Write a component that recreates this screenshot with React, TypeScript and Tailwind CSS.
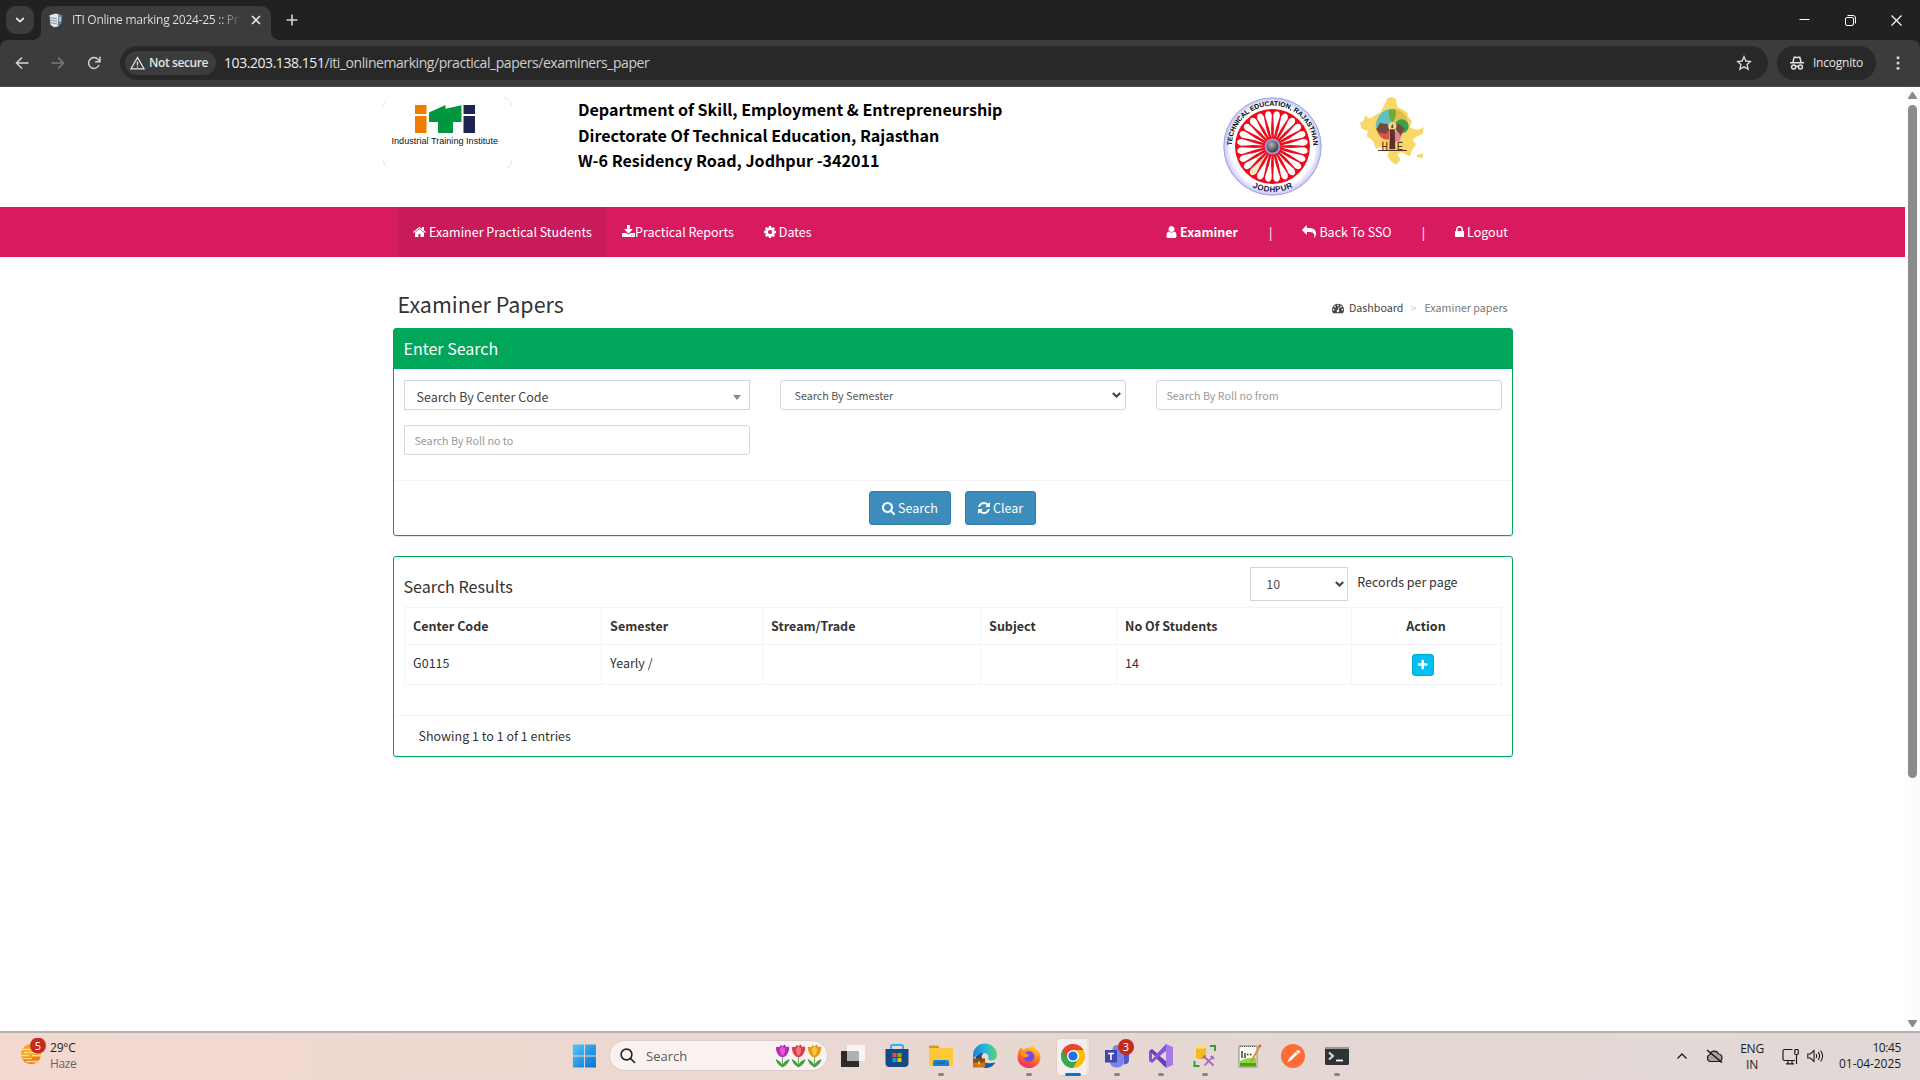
import type { ReactNode } from 'react';

/* ---------- Solid glyph icons (1792-unit grid) ---------- */
const GLYPHS = {
  home: [1664, 'M1472 992v480q0 26-19 45t-45 19h-384v-384h-256v384h-384q-26 0-45-19t-19-45v-480q0-1 .5-3t.5-3l575-474 575 474q1 2 1 6zm223-69l-62 74q-8 9-21 11h-3q-13 0-21-7l-692-577-692 577q-12 8-24 7-13-2-21-11l-62-74q-8-10-7-23.5t11-21.5l719-599q32-26 76-26t76 26l244 204v-195q0-14 9-23t23-9h192q14 0 23 9t9 23v408l219 182q10 8 11 21.5t-7 23.5z'],
  download: [1664, 'M1344 1344q0-26-19-45t-45-19-45 19-19 45 19 45 45 19 45-19 19-45zm256 0q0-26-19-45t-45-19-45 19-19 45 19 45 45 19 45-19 19-45zm128-224v320q0 40-28 68t-68 28h-1472q-40 0-68-28t-28-68v-320q0-40 28-68t68-28h465l135 136q58 56 136 56t136-56l136-136h464q40 0 68 28t28 68zm-325-569q17 41-14 70l-448 448q-18 19-45 19t-45-19l-448-448q-31-29-14-70 17-39 59-39h256v-448q0-26 19-45t45-19h256q26 0 45 19t19 45v448h256q42 0 59 39z'],
  cog: [1536, 'M1152 896q0-106-75-181t-181-75-181 75-75 181 75 181 181 75 181-75 75-181zm512-109v222q0 12-8 23t-20 13l-185 28q-19 54-39 91 35 50 107 138 10 12 10 25t-9 23q-27 37-99 108t-94 71q-12 0-26-9l-138-108q-44 23-91 38-16 136-29 186-7 28-36 28h-222q-14 0-24.5-8.5t-11.5-21.5l-28-184q-49-16-90-37l-141 107q-10 9-25 9-14 0-25-11-126-114-165-168-7-10-7-23 0-12 8-23 15-21 51-66.5t54-70.5q-27-50-41-99l-183-27q-13-2-21-12.5t-8-23.5v-222q0-12 8-23t19-13l186-28q14-46 39-92-40-57-107-138-10-12-10-24 0-10 9-23 26-36 98.5-107.5t94.5-71.5q13 0 26 10l138 107q44-23 91-38 16-136 29-186 7-28 36-28h222q14 0 24.5 8.5t11.5 21.5l28 184q49 16 90 37l142-107q9-9 24-9 13 0 25 10 129 119 165 170 7 8 7 22 0 12-8 23-15 21-51 66.5t-54 70.5q26 50 41 98l183 28q13 2 21 12.5t8 23.5z'],
  user: [1408, 'M1536 1399q0 109-62.5 187t-150.5 78h-854q-88 0-150.5-78t-62.5-187q0-85 8.5-160.5t31.5-152 58.5-131 94-89 134.5-34.5q131 128 313 128t313-128q76 0 134.5 34.5t94 89 58.5 131 31.5 152 8.5 160.5zm-256-887q0 159-112.5 271.5t-271.5 112.5-271.5-112.5-112.5-271.5 112.5-271.5 271.5-112.5 271.5 112.5 112.5 271.5z'],
  reply: [1792, 'M1792 1120q0 166-127 451-3 7-10.5 24t-13.5 30-13 22q-12 17-28 17-15 0-23.5-10t-8.5-25q0-9 2.5-26.5t2.5-23.5q5-68 5-123 0-101-17.5-181t-48.5-138.5-80-101-105.5-69.5-133-42.5-154-21.5-175.5-6h-224v256q0 26-19 45t-45 19-45-19l-512-512q-19-19-19-45t19-45l512-512q19-19 45-19t45 19 19 45v256h224q713 0 875 403 53 134 53 333z'],
  lock: [1152, 'M640 768h512v-192q0-106-75-181t-181-75-181 75-75 181v192zm832 96v576q0 40-28 68t-68 28h-960q-40 0-68-28t-28-68v-576q0-40 28-68t68-28h32v-192q0-184 132-316t316-132 316 132 132 316v192h32q40 0 68 28t28 68z'],
  search: [1664, 'M1216 832q0-185-131.5-316.5t-316.5-131.5-316.5 131.5-131.5 316.5 131.5 316.5 316.5 131.5 316.5-131.5 131.5-316.5zm512 832q0 52-38 90t-90 38q-54 0-90-38l-343-342q-179 124-399 124-143 0-273.5-55.5t-225-150-150-225-55.5-273.5 55.5-273.5 150-225 225-150 273.5-55.5 273.5 55.5 225 150 150 225 55.5 273.5q0 220-124 399l343 343q37 37 37 90z'],
  refresh: [1536, 'M1639 1056q0 5-1 7-64 268-268 434.5t-478 166.5q-146 0-282.5-55t-243.5-157l-129 129q-19 19-45 19t-45-19-19-45v-448q0-26 19-45t45-19h448q26 0 45 19t19 45-19 45l-137 137q71 66 161 102t187 36q134 0 250-65t186-179q11-17 53-117 8-23 30-23h192q13 0 22.5 9.5t9.5 22.5zm25-800v448q0 26-19 45t-45 19h-448q-26 0-45-19t-19-45 19-45l138-138q-148-137-349-137-134 0-250 65t-186 179q-11 17-53 117-8 23-30 23h-199q-13 0-22.5-9.5t-9.5-22.5v-7q65-268 270-434.5t480-166.5q146 0 284 55.5t245 156.5l130-129q19-19 45-19t45 19 19 45z'],
  plus: [1408, 'M1600 736v192q0 40-28 68t-68 28h-416v416q0 40-28 68t-68 28h-192q-40 0-68-28t-28-68v-416h-416q-40 0-68-28t-28-68v-192q0-40 28-68t68-28h416v-416q0-40 28-68t68-28h192q40 0 68 28t28 68v416h416q40 0 68 28t28 68z'],
  gauge: [1792, 'M384 1152q0-53-37.5-90.5t-90.5-37.5-90.5 37.5-37.5 90.5 37.5 90.5 90.5 37.5 90.5-37.5 37.5-90.5zm192-448q0-53-37.5-90.5t-90.5-37.5-90.5 37.5-37.5 90.5 37.5 90.5 90.5 37.5 90.5-37.5 37.5-90.5zm428 481l101-382q6-26-7.5-48.5t-38.5-29.5-48 6.5-30 39.5l-101 382q-60 5-107 43.5t-63 98.5q-20 77 20 146t117 89 146-20 89-117q16-60-6-117t-72-91zm660-33q0-53-37.5-90.5t-90.5-37.5-90.5 37.5-37.5 90.5 37.5 90.5 90.5 37.5 90.5-37.5 37.5-90.5zm-640-640q0-53-37.5-90.5t-90.5-37.5-90.5 37.5-37.5 90.5 37.5 90.5 90.5 37.5 90.5-37.5 37.5-90.5zm448 192q0-53-37.5-90.5t-90.5-37.5-90.5 37.5-37.5 90.5 37.5 90.5 90.5 37.5 90.5-37.5 37.5-90.5zm320 448q0 261-141 483-19 29-54 29h-1402q-35 0-54-29-141-221-141-483 0-182 71-348t191-286 286-191 348-71 348 71 286 191 191 286 71 348z'],
} as const;

function Glyph({ name, size = 14, className = '' }: { name: keyof typeof GLYPHS; size?: number; className?: string }) {
  const [w, d] = GLYPHS[name];
  return (
    <svg className={`shrink-0 fill-current ${className}`} width={(w / 1792) * size} height={size} viewBox={`${(1792 - w) / 2} 0 ${w} 1792`} overflow="visible">
      <path d={d} />
    </svg>
  );
}

/* ---------- Browser chrome ---------- */
function TabStrip() {
  return (
    <div className="flex h-10 items-start bg-[#202221] text-[#e3e3e3]">
      <div className="mt-[6px] ml-[6px] flex h-7 w-7 items-center justify-center rounded-[10px] bg-[#3c3c3c]">
        <svg width="10" height="6" viewBox="0 0 10 6" fill="none" stroke="#e3e3e3" strokeWidth="1.8"><path d="M1.2 1 5 4.6 8.8 1" /></svg>
      </div>
      <div className="flex h-10 w-[246px] items-end pt-[6px] -ml-[1px]">
        <svg width="8" height="10" viewBox="0 0 8 10" className="shrink-0" fill="#3c3c3c"><path d="M8 0v10H0A8 9 0 0 0 8 0z" /></svg>
        <div className="flex h-[34px] w-[231px] items-center rounded-t-[10px] bg-[#3c3c3c] pb-[6px]">
          <svg className="ml-[7px] shrink-0" width="16" height="16" viewBox="0 0 16 16">
            <path d="M1.5 3.2 8 1.5l3 1-.5 12-4.5.8L2.6 13z" fill="#dfe6ec" />
            <path d="M10.5 2.2 14.5 3.2l-1 8-3.8 3.6z" fill="#5f7f9e" />
            <path d="M2 5.5 9 7M2.3 8l6.7 1.4M2.5 10.500 9 12" stroke="#8398a8" strokeWidth="1" />
            <path d="M12 4.8v5" stroke="#d3dde5" strokeWidth="1.4" />
          </svg>
          <div className="ml-[8px] w-[171px] bg-[linear-gradient(90deg,#e3e3e3_86%,#444444_99%)] bg-clip-text font-['Open_Sans',sans-serif] text-[12px] leading-5 tracking-[-0.27px] whitespace-nowrap text-transparent">
            ITI Online marking 2024-25 :: Pr
          </div>
          <svg className="ml-[8px] shrink-0" width="10" height="10" viewBox="0 0 10 10" stroke="#e3e3e3" strokeWidth="1.6"><path d="M1 1l8 8M9 1 1 9" /></svg>
        </div>
        <svg width="8" height="10" viewBox="0 0 8 10" className="shrink-0" fill="#3c3c3c"><path d="M0 0v10h8A8 9 0 0 1 0 0z" /></svg>
      </div>
      <svg className="mt-[14px] ml-[7px]" width="12" height="12" viewBox="0 0 12 12" stroke="#d6d6d6" strokeWidth="1.6"><path d="M6 .5v11M.5 6h11" /></svg>
      <div className="mt-[10px] mr-[18px] ml-auto flex items-center gap-[35px]">
        <svg width="11" height="20" viewBox="0 0 11 20" stroke="#fff"><path d="M.5 9.5h10" /></svg>
        <svg width="11" height="11" viewBox="0 0 11 11" fill="none" stroke="#fff"><rect x=".5" y="2.5" width="8" height="8" rx="1.5" /><path d="M2.5.5H8a2.5 2.5 0 0 1 2.5 2.5v5.5" /></svg>
        <svg width="11" height="11" viewBox="0 0 11 11" fill="none" stroke="#fff" strokeWidth="1.2"><path d="M.5.5l10 10M10.5.5l-10 10" /></svg>
      </div>
    </div>
  );
}

function Toolbar() {
  return (
    <div className="flex h-[47px] items-center rounded-t-[8px] border-b border-[#4b4b4b] bg-[#3c3c3c] font-['Open_Sans',sans-serif] text-[#e3e3e3]">
      <svg className="ml-[15px]" width="14" height="14" viewBox="0 0 14 14" fill="none" stroke="#d6d6d6" strokeWidth="1.5"><path d="M7 1.500 1.500 7 7 12.500M1.500 7h12" /></svg>
      <svg className="ml-[22px]" width="14" height="14" viewBox="0 0 14 14" fill="none" stroke="#7a7a7a" strokeWidth="1.5"><path d="M7 1.500 12.500 7 7 12.500M12.500 7H.5" /></svg>
      <svg className="ml-[22px]" width="14" height="14" viewBox="0 0 14 14" fill="none" stroke="#d6d6d6" strokeWidth="1.5"><path d="M12 9a5.400 5.400 0 1 1-.8-5.400L13 5.500M13 .8v4.900H8.200" /></svg>
      <div className="ml-[19px] flex h-[34px] w-[1648px] items-center rounded-full bg-[#282828]">
        <div className="ml-[5px] flex h-6 w-[91px] items-center rounded-full bg-[#3c3c3c]">
          <svg className="ml-[5px]" width="15" height="14" viewBox="0 0 15 14" fill="none" stroke="#e3e3e3" strokeWidth="1.3"><path d="M7.500 1.500 14 12.800H1zM7.500 5.500v3.800M7.500 10.200v1.400" /></svg>
          <span className="ml-[4px] text-[12px] leading-5 font-semibold tracking-[-0.4px] whitespace-nowrap">Not secure</span>
        </div>
        <span className="ml-[8px] text-[14px] leading-5 tracking-[-0.44px] whitespace-nowrap">
          <span className="text-[#eeeeee]">103.203.138.151</span>
          <span className="text-[#cfcfcf]">/iti_onlinemarking/practical_papers/examiners_paper</span>
        </span>
        <svg className="mr-[16px] ml-auto" width="16" height="16" viewBox="0 0 16 16" fill="none" stroke="#d6d6d6" strokeWidth="1.4"><path d="M8 1.800 9.900 6l4.600.5-3.400 3.100 1 4.500L8 11.800l-4.100 2.300 1-4.500L1.500 6.500 6.100 6z" /></svg>
      </div>
      <div className="ml-[9px] flex h-[34px] w-[99px] items-center rounded-full bg-[#282828]">
        <svg className="ml-[12px]" width="16" height="16" viewBox="0 0 16 16" fill="none" stroke="#e3e3e3" strokeWidth="1.5">
          <path d="M4 7 5.200 2.200h1.500L8 2.700l1.300-.5h1.500L12 7M1 7.700h14" />
          <circle cx="4.600" cy="12" r="2" /><circle cx="11.400" cy="12" r="2" /><path d="M6.300 11.700q1.700-.9 3.400 0" />
        </svg>
        <span className="ml-[8px] text-[12px] leading-5 tracking-[-0.23px]">Incognito</span>
      </div>
      <svg className="ml-[20px]" width="4" height="14" viewBox="0 0 4 14" fill="#d6d6d6"><circle cx="2" cy="1.800" r="1.500" /><circle cx="2" cy="7" r="1.500" /><circle cx="2" cy="12.200" r="1.500" /></svg>
    </div>
  );
}

/* ---------- Header logos ---------- */
function ItiLogo() {
  return (
    <svg width="129" height="72" viewBox="0 0 129 72">
      <path d="M.5 9A9 9 0 0 1 4 1.500M.5 63A9 9 0 0 0 4 70.500M128.500 9A9 9 0 0 0 120 .5M128.500 63a9 9 0 0 1-6 8.500" fill="none" stroke="#cfe0f2" strokeWidth=".7" />
      <g transform="translate(32 8)">
        <path d="M0 0h11.500v9H0zM0 11h11.500v17H0z" fill="#f07d00" />
        <path d="M48.500 0H60v9H48.500zM48.500 11H60v17H48.500z" fill="#1d2454" />
        <path d="M14 7.500 30.500 0v3.800L46.500.3V17H38v11H23V17h-9z" fill="#009640" />
      </g>
      <text x="8.500" y="46.500" fontFamily="Liberation Sans, Arial, sans-serif" fontSize="9.100" fill="#111" textLength="106.500">Industrial Training Institute</text>
    </svg>
  );
}

function WheelEmblem() {
  const spokes = Array.from({ length: 24 }, (_, i) => i * 15);
  return (
    <svg width="99" height="99" viewBox="0 0 99 99">
      <defs>
        <path id="arcTop" d="M8.700 49.500a40.800 40.800 0 0 1 81.600 0" />
        <path id="arcBottom" d="M4 49.500a45.500 45.500 0 0 0 91 0" />
        <radialGradient id="hub" cx=".4" cy=".35" r=".7"><stop offset="0" stopColor="#b5b5b5" /><stop offset="1" stopColor="#333" /></radialGradient>
        <radialGradient id="rim"><stop offset=".86" stopColor="#fff" /><stop offset="1" stopColor="#c3c3f5" /></radialGradient>
      </defs>
      <circle cx="49.500" cy="49.500" r="48.700" fill="url(#rim)" stroke="#a3a3e0" strokeWidth="1" />
      <circle cx="49.500" cy="49.500" r="37.500" fill="#ee0c1c" />
      {spokes.map((a) => (
        <path key={a} transform={`rotate(${a + 7.5} 49.500 49.500)`} d="M49.500 41 48.500 31 46.100 18.500Q46.500 14.300 49.500 14Q52.500 14.300 52.900 18.500L50.500 31z" fill={a === 210 ? '#f7e6c8' : '#fff'} />
      ))}
      <circle cx="49.500" cy="49.500" r="8" fill="#a58fe0" />
      <circle cx="49.500" cy="49.500" r="6" fill="url(#hub)" />
      <text fontFamily="Liberation Sans, Arial, sans-serif" fontWeight="700" fontSize="6.800" fill="#000">
        <textPath href="#arcTop" startOffset="1" textLength="126">TECHNICAL EDUCATION, RAJASTHAN</textPath>
      </text>
      <text fontFamily="Liberation Sans, Arial, sans-serif" fontWeight="700" fontSize="8" fill="#15154a">
        <textPath href="#arcBottom" startOffset="50%" textAnchor="middle" textLength="42">JODHPUR</textPath>
      </text>
    </svg>
  );
}

function StateEmblem() {
  return (
    <svg width="64" height="68" viewBox="0 0 192 204">
      <path fill="#f8d866" d="M95 0 108 6 112 30 128 38 140 44 145 60 156 72 150 92 165 97 176 98 192 90 188 110 172 118 158 128 168 142 156 160 150 178 135 172 125 165 112 172 122 188 108 203 92 192 82 178 88 160 60 150 48 155 38 130 20 118 24 102 5 95 0 78 12 70 15 54 28 65 40 58 62 45 75 20 82 4zM170 174l20-5-2 13-16-1z" />
      <path fill="#dcc04c" d="M96 36a48 48 0 0 1 49 48L96 84z" />
      <path fill="#5fc0bd" d="M47 90a49 52 0 0 1 46-54v54z" />
      <path fill="#6bab3c" d="M88 37h18q6 20-9 42-15-22-9-42z" />
      <circle cx="125" cy="88" r="21" fill="#3e9e45" />
      <path fill="#d9534a" d="M50 98 90 100 86 128Q60 130 50 98z" />
      <path fill="#e879a4" d="M100 100l27 10-8 20-20 8z" />
      <path fill="#75493e" d="M48 96 60 78 84 82 88 98 78 110 56 106zM104 90l12-10 18 14-12 22z" />
      <circle cx="97" cy="88" r="12" fill="#f2d68a" />
      <path fill="#5a3229" d="M97 80l4 12h-8zM90 97h14l2 60h-18zM54 159h87v3H54z" />
      <text x="65" y="158" fontFamily="Liberation Sans, Arial, sans-serif" fontSize="33" textLength="18" lengthAdjust="spacingAndGlyphs" fill="#5a3229" stroke="#5a3229">H</text>
      <text x="111" y="158" fontFamily="Liberation Sans, Arial, sans-serif" fontSize="33" textLength="17" lengthAdjust="spacingAndGlyphs" fill="#5a3229" stroke="#5a3229">E</text>
    </svg>
  );
}

/* ---------- Page ---------- */
function SiteHeader() {
  return (
    <header className="flex h-[120px] items-start pt-[10px] pl-[383px]">
      <ItiLogo />
      <div className="ml-[66px] w-[645px] text-[16.1px] leading-[25.6px] font-bold text-black">
        <div>Department of Skill, Employment &amp; Entrepreneurship</div>
        <div>Directorate Of Technical Education, Rajasthan</div>
        <div>W-6 Residency Road, Jodhpur -342011</div>
      </div>
      <WheelEmblem />
      <div className="ml-[38px]"><StateEmblem /></div>
    </header>
  );
}

function NavBar() {
  return (
    <nav className="flex h-[50px] bg-[#d81b60] pl-[398px] text-[12.5px] leading-5 text-white">
      <div className="flex w-[209px] items-center bg-[#c91a5a] pl-[15px]"><Glyph name="home" /><span className="ml-[3px]">Examiner Practical Students</span></div>
      <div className="flex items-center pl-[15px]"><Glyph name="download" /><span>Practical Reports</span></div>
      <div className="flex items-center pl-[30px]"><Glyph name="cog" /><span className="ml-[3px]">Dates</span></div>
      <div className="mr-[397px] ml-auto flex items-center">
        <Glyph name="user" /><span className="ml-[3px] font-bold">Examiner</span>
        <span className="mr-[30px] ml-[31px]">|</span>
        <Glyph name="reply" /><span className="ml-[3px]">Back To SSO</span>
        <span className="mr-[30px] ml-[30px]">|</span>
        <Glyph name="lock" /><span className="ml-[3px]">Logout</span>
      </div>
    </nav>
  );
}

function SelectArrow() {
  return <svg width="9" height="6" viewBox="0 0 9 6" fill="none" stroke="#444" strokeWidth="2.2"><path d="M.8 1l3.700 3.500L8.200 1" /></svg>;
}

function Field({ children }: { children: ReactNode }) {
  return <div className="flex h-[30px] items-center rounded-[3px] border border-[#d2d6de] px-[10px] pt-px text-[10.7px] leading-5 text-[#999]">{children}</div>;
}

function SearchBox() {
  return (
    <section className="h-[208px] rounded-[3px] border border-[#00a65a] shadow-[0_1px_1px_rgba(0,0,0,0.1)]">
      <div className="flex h-10 items-center bg-[#00a65a] pb-[3px] pl-[10px] text-[16px] leading-5 text-white">Enter Search</div>
      <div className="grid h-[111px] grid-cols-3 content-start gap-x-[30px] gap-y-[15px] px-[10px] pt-[11px]">
        <div className="flex h-[30px] items-center justify-between border border-[#d2d6de] pr-[8px] pl-[12px] text-[12.5px] leading-5 text-[#444]">
          <span className="pt-[4px]">Search By Center Code</span>
          <svg className="mt-1" width="8" height="5" viewBox="0 0 8 5" fill="#888"><path d="M0 0h8L4 5z" /></svg>
        </div>
        <div className="flex h-[30px] items-center justify-between rounded-[3px] border border-[#d2d6de] pr-[4px] pl-[14px] text-[10.75px] leading-5 text-[#555]">
          <span className="pt-[2px]">Search By Semester</span>
          <SelectArrow />
        </div>
        <Field>Search By Roll no from</Field>
        <Field>Search By Roll no to</Field>
      </div>
      <div className="flex justify-center gap-[14px] border-t border-[#f4f4f4] pt-[10px] text-[12.5px] leading-5 text-white">
        <div className="flex h-[34px] w-[82px] items-center justify-center rounded-[3px] border border-[#367fa9] bg-[#3c8dbc]"><Glyph name="search" /><span className="ml-[3px]">Search</span></div>
        <div className="flex h-[34px] w-[71px] items-center justify-center rounded-[3px] border border-[#367fa9] bg-[#3c8dbc]"><Glyph name="refresh" /><span className="ml-[3px]">Clear</span></div>
      </div>
    </section>
  );
}

function ResultsBox() {
  const cell = 'border border-[#f4f4f4] pl-[8.6px]';
  return (
    <section className="mt-5 h-[201px] rounded-[3px] border border-[#00a65a] text-[12.5px] leading-5 text-[#333] shadow-[0_1px_1px_rgba(0,0,0,0.1)]">
      <div className="flex h-[50px] items-start pt-[10px] pl-[10px]">
        <div className="mt-[9px] text-[16.1px] leading-5">Search Results</div>
        <div className="ml-auto flex h-[34px] w-[98px] items-center justify-between border border-[#d2d6de] pr-[3px] pl-[15px] text-[#555]"><span>10</span><SelectArrow /></div>
        <div className="mt-[5px] mr-[54px] ml-[9px]">Records per page</div>
      </div>
      <table className="ml-[10px] w-[1098px] table-fixed border-collapse text-left">
        <colgroup><col className="w-[197px]" /><col className="w-[161px]" /><col className="w-[218px]" /><col className="w-[136px]" /><col className="w-[235px]" /><col /></colgroup>
        <thead>
          <tr className="h-[37px] font-bold">
            <th className={cell}>Center Code</th><th className={cell}>Semester</th><th className={cell}>Stream/Trade</th><th className={cell}>Subject</th><th className={cell}>No Of Students</th><th className="border border-[#f4f4f4] text-center">Action</th>
          </tr>
        </thead>
        <tbody>
          <tr className="h-10 align-top">
            <td className={`${cell} pt-[8px]`}>G0115</td><td className={`${cell} pt-[8px]`}>Yearly /</td><td className={cell} /><td className={cell} /><td className={`${cell} pt-[8px]`}>14</td>
            <td className="border border-[#f4f4f4] pt-[9px]">
              <div className="mx-auto flex h-[22px] w-[22px] -translate-x-[3px] items-center justify-center rounded-[3px] border border-[#00acd6] bg-[#00c0ef] text-white"><Glyph name="plus" size={12} /></div>
            </td>
          </tr>
        </tbody>
      </table>
      <div className="mt-[30px] border-t border-[#f4f4f4] pt-[10px] pl-[25px]">Showing 1 to 1 of 1 entries</div>
    </section>
  );
}

/* ---------- Taskbar ---------- */
function TaskIcon({ children, run }: { children: ReactNode; run?: boolean }) {
  return (
    <div className="flex h-[47px] w-[44px] flex-col items-center pt-[11px]">
      <svg width="24" height="24" viewBox="0 0 24 24" overflow="visible">{children}</svg>
      {run && <div className="mt-[5px] h-[3px] w-[6px] rounded-full bg-[#8a8381]" />}
    </div>
  );
}

function Tulip({ c, d }: { c: string; d: string }) {
  return (
    <svg width="15" height="24" viewBox="0 0 15 24">
      <path d="M7.500 11v12M7.500 23Q2.500 21 1 15.500q4.500 2 6.500 6Q9.500 17 14 15.500q-1 5-6.500 7.500z" stroke="#4a9a3c" strokeWidth=".8" fill="#4a9a3c" />
      <path d="M.8 3 4.500 3 5.500 1 7.500 2 10 .5l1 2.500 3.200-.5Q14.500 9 10 12.500q-2.500 1-5 0Q1 9.500.8 3z" fill={c} />
      <path d="M5 4.500 7.500 2 10 4.500Q10.500 9 7.500 12 4.500 9 5 4.500z" fill={d} />
    </svg>
  );
}

function Taskbar() {
  return (
    <footer className="flex h-[49px] border-t-2 border-[#b8b0af] bg-[linear-gradient(90deg,#f3d9d0_0%,#ecd8d1_35%,#e6d7d2_60%,#e1d9d7_100%)] font-['Open_Sans',sans-serif] text-[#1c1c1c]">
      <div className="flex w-[562px] items-start pt-[5px] pl-[18px]">
        <svg width="30" height="30" viewBox="0 0 30 30">
          <circle cx="13" cy="16" r="10" fill="#f7a41c" />
          <path d="M3.500 19a10 10 0 0 0 19 0z" fill="#ee7d12" />
          <path d="M3 11.500h12M1 17.500h10M14 17.500h9M6 14.500h17M1 20.500h13M8 23.500h12" stroke="#fbd98f" strokeWidth="1.3" />
          <circle cx="20" cy="7.500" r="8" fill="#c42b1c" />
          <text x="20" y="11.500" textAnchor="middle" fontSize="11" fill="#fff" fontFamily="Open Sans, sans-serif">5</text>
        </svg>
        <div className="ml-[2px] pt-[2px] text-[12px] leading-4">
          <div className="tracking-[-0.2px]">29°C</div>
          <div className="tracking-[-0.4px] text-[#6b625f]">Haze</div>
        </div>
      </div>
      <TaskIcon>
        <defs><linearGradient id="win" x1="0" y1="0" x2="1" y2="1"><stop stopColor="#53c6fb" /><stop offset="1" stopColor="#0470cf" /></linearGradient></defs>
        <path fill="url(#win)" d="M.9.5h11v11h-11zM12.900.5h11v11h-11zM.9 12.500h11v11h-11zM12.900 12.500h11v11h-11z" />
      </TaskIcon>
      <div className="mt-[7px] ml-[3px] flex h-[31px] w-[219px] items-center rounded-full border border-[#dccdc9] bg-[#f8f3f1]">
        <svg className="ml-[10px]" width="16" height="16" viewBox="0 0 16 16" fill="none" stroke="#222" strokeWidth="1.6"><circle cx="6.500" cy="6.500" r="5.400" /><path d="M10.400 10.400 15 15" /></svg>
        <span className="ml-[10px] text-[13px] leading-5 text-[#5c5856]">Search</span>
        <div className="mr-[5px] ml-auto flex gap-[1px]"><Tulip c="#b32fb4" d="#e056cf" /><Tulip c="#d83b4f" d="#f5727c" /><Tulip c="#e59a13" d="#fcc53f" /></div>
      </div>
      <div className="w-[3px]" />
      <TaskIcon><path d="M0 7h18v16H0z" fill="#2b2b2b" /><path d="M6 1h18v16H6z" fill="#f7f7f7" opacity=".9" /><path d="M6 7h12v10H6z" fill="#b1b1b1" /></TaskIcon>
      <TaskIcon>
        <path d="M6 6V2.500Q6 1 7.500 1h9Q18 1 18 2.500V6" fill="none" stroke="#27b3f2" strokeWidth="2" />
        <path d="M.5 5h23v14q0 4-4 4h-15q-4 0-4-4z" fill="#154a86" />
        <path d="M7.500 9h4v4h-4z" fill="#f25022" /><path d="M12.500 9h4v4h-4z" fill="#7fba00" /><path d="M7.500 14h4v4h-4z" fill="#00a4ef" /><path d="M12.500 14h4v4h-4z" fill="#ffb900" />
      </TaskIcon>
      <TaskIcon run>
        <path d="M0 1.500h9l2 3H0z" fill="#dd9a10" /><path d="M0 4h24v17q0 1-1 1H1q-1 0-1-1z" fill="#fdc93a" />
        <path d="M4 22v-4q0-2 2-2h12q2 0 2 2v4z" fill="#1c7ed1" /><path d="M8 19h8" stroke="#0f5fa8" />
      </TaskIcon>
      <TaskIcon>
        <defs><linearGradient id="edge" x1="0" x2="1"><stop stopColor="#1580d0" /><stop offset=".5" stopColor="#27b8dc" /><stop offset="1" stopColor="#58d668" /></linearGradient></defs>
        <path d="M0 12A12 12 0 0 1 24 11q0 5-6 5.500-4-.5-2.500-3.500 0-4-5-4Q3 9 0 15z" fill="url(#edge)" />
        <path d="M2 13q5-5 8.500-4-3 3-1.500 7 3 5 13.500 2.500-4 6-11 5.500z" fill="#0f5fae" />
        <path d="M0 15h12v8.500H0z" fill="#c9761a" /><path d="M0 14.500h12v4H0z" fill="#8c4b0d" /><path d="M4 15v-2h4v2" fill="none" stroke="#5a2f07" /><path d="M5 17.500h2v3H5z" fill="#f7c044" />
      </TaskIcon>
      <TaskIcon run>
        <defs><linearGradient id="fx" x1=".7" y1="0" x2=".3" y2="1"><stop stopColor="#ffe14a" /><stop offset=".5" stopColor="#ff7a1c" /><stop offset="1" stopColor="#f0246c" /></linearGradient></defs>
        <path d="M2 6 4 3l2 3q3-3 7-2.500L15.500.2q1 3.300 4.500 5.300 3.500 4 3.400 8A11.400 10.500 0 0 1 .6 13.500Q.6 9 2 6z" fill="url(#fx)" />
        <circle cx="12" cy="12.500" r="5.400" fill="#7a4be0" /><path d="M3 9q4-1 7 1l2 1.500q-2 2.500-5 2z" fill="#ff9a1f" />
      </TaskIcon>
      <div className="relative flex h-[47px] w-[44px] justify-center">
        <div className="mt-[5px] -mr-[4px] h-[38px] w-[34px] rounded-[4px] border border-[#ddd0cd] bg-[#f6eeec]" />
        <div className="mt-[5px] h-[38px] w-[4px] rounded-r-[4px] border border-l-0 border-[#ddd0cd] bg-[#efe6e3]" />
        <div className="absolute top-[11px] left-[10px] flex flex-col items-center">
          <svg width="24" height="24" viewBox="0 0 24 24">
            <circle cx="12" cy="12" r="12" fill="#fbbc05" />
            <path d="M1.600 6A12 12 0 0 0 12 24L17.200 15 12 12z" fill="#34a853" />
            <path d="M1.600 6A12 12 0 0 1 22.400 6H12L6.800 15z" fill="#ea4335" />
            <circle cx="12" cy="12" r="6" fill="#fff" /><circle cx="12" cy="12" r="4.600" fill="#1a73e8" />
          </svg>
          <div className="mt-[5px] h-[3px] w-4 rounded-full bg-[#0078d4]" />
        </div>
      </div>
      <TaskIcon run>
        <circle cx="12" cy="5.500" r="4.500" fill="#7b83eb" /><circle cx="20.500" cy="7" r="3.200" fill="#5059c9" />
        <path d="M5 9h14v8q0 6-7 6.500T5 17z" fill="#7b83eb" /><path d="M19 9h5v7q0 4-5 4.500z" fill="#5059c9" />
        <path d="M0 6h12v12.500H0z" fill="#4049ab" /><path d="M3 9.500h6M6 9.500V16" stroke="#fff" strokeWidth="1.6" />
        <circle cx="21" cy="3" r="8" fill="#c42b1c" /><text x="21" y="7" textAnchor="middle" fontSize="11" fill="#fff" fontFamily="Open Sans, sans-serif">3</text>
      </TaskIcon>
      <TaskIcon run>
        <path d="M17 0l7 3v18l-7 3z" fill="#a978e8" /><path d="M0 7l3-2 14 12v7L3 10z" fill="#6a3fb0" /><path d="M17 0v7L3 19l-3-2V7l3 2v6z" fill="#8454d6" /><path d="M17 7v10l-6-5z" fill="#e6d7d2" /><path d="M3 9.500V15l3-2.800z" fill="#e6d7d2" />
      </TaskIcon>
      <TaskIcon run>
        <path d="M3 3v10q0 2 5 2t5-2V3z" fill="#f5b921" /><ellipse cx="8" cy="3" rx="5" ry="1.800" fill="#fde07a" />
        <path d="M17 2h5v5" fill="none" stroke="#3f9a3c" strokeWidth="2" /><path d="M1.500 17V22H6.500" fill="none" stroke="#3f9a3c" strokeWidth="2" />
        <path d="M11 12.500 20.500 21.500M20 12.500l-8.500 9" stroke="#a566bf" strokeWidth="1.800" /><path d="M18 12l3 3M9.500 14l3-2.500" stroke="#a566bf" strokeWidth="1.800" />
      </TaskIcon>
      <TaskIcon>
        <path d="M2 2h18v21H2z" fill="#fbfbf3" stroke="#8b8b80" /><path d="M3 17q8-4 16-3v8H3z" fill="#8fd63f" /><path d="M3 19h16v3.500H3z" fill="#4fa313" />
        <path d="M5 7v7M8 9v5M10 10.500h1.500M13 10.500h1.500" stroke="#222" strokeWidth="1.300" /><path d="M3 2.500h16" stroke="#555" strokeDasharray="1 1" /><path d="M22.500 2.500 14 18" stroke="#d99a3a" strokeWidth="2.200" /><path d="M23.500.8 22.300 3" stroke="#d5526b" strokeWidth="2.300" />
      </TaskIcon>
      <TaskIcon><circle cx="12" cy="12" r="12" fill="#ff6c37" /><path d="M6 18.500 8.500 14l6-6 2 2-6 6zM15 7.500q1.500-2.500 3.500-1t-1 3.500z" fill="#fff" /></TaskIcon>
      <TaskIcon run><rect x="0" y="3" width="24" height="18" rx="1.500" fill="#2f3335" /><path d="M0 5V4.500Q0 3 1.500 3h21Q24 3 24 4.500V5z" fill="#9a9a9a" /><path d="M4 8.500 8 12l-4 3.500" fill="none" stroke="#dcdcdc" strokeWidth="2" /><path d="M11 16.500h7" stroke="#fff" strokeWidth="1.800" /></TaskIcon>
      <div className="mr-[19px] ml-auto flex h-[46px] items-center text-[12px] leading-4">
        <svg width="10" height="6" viewBox="0 0 10 6" fill="none" stroke="#1c1c1c" strokeWidth="1.300"><path d="M.5 5.500 5 1l4.500 4.500" /></svg>
        <svg className="ml-[19px]" width="17" height="14" viewBox="0 0 17 14" fill="none" stroke="#1c1c1c" strokeWidth="1.200"><path d="M4.500 12.500a3.600 3.600 0 0 1-.5-7 4.500 4.500 0 0 1 8.600-.5 3.800 3.800 0 0 1 .4 7.500z" fill="#a8a4a3" /><path d="M1 1l15 12.500" strokeWidth="1.600" /></svg>
        <div className="ml-[16px] w-[26px] pt-px text-center tracking-[-0.2px]"><div>ENG</div><div>IN</div></div>
        <svg className="ml-[17px]" width="17" height="17" viewBox="0 0 17 17" fill="none" stroke="#1c1c1c" strokeWidth="1.200"><path d="M10.500 1.500H2.500q-1.500 0-1.500 1.500v8q0 1.500 1.500 1.500H13M4 15.800h8M6 12.500v3M10 12.500v3M14.500 7v9" /><rect x="12.800" y="1.500" width="3.400" height="5" rx=".8" /></svg>
        <svg className="ml-[8px]" width="17" height="14" viewBox="0 0 17 14" fill="none" stroke="#1c1c1c" strokeWidth="1.100"><path d="M.8 5v4h2.500L7 12.500v-11L3.300 5zM9 5q1.400 2 0 4M11.200 3.200q2.800 3.800 0 7.600M13.500 1.500q4.200 5.500 0 11" /></svg>
        <div className="ml-[15px] text-right"><div className="tracking-[-0.4px]">10:45</div><div className="tracking-[-0.07px]">01-04-2025</div></div>
      </div>
    </footer>
  );
}

export default function App() {
  return (
    <div className="flex h-[1080px] w-[1920px] flex-col overflow-hidden bg-[#202221]">
      <TabStrip />
      <Toolbar />
      <div className="flex h-[944px] bg-white">
        <main className="w-[1905px] font-['Noto_Sans_CJK_SC',sans-serif]">
          <SiteHeader />
          <NavBar />
          <div className="mx-auto w-[1120px]">
            <div className="flex h-[71px] items-start pr-[4px] pl-[5px] text-[#333]">
              <h1 className="mt-[31px] text-[21.45px] leading-8">Examiner Papers</h1>
              <div className="mt-[41px] ml-auto flex items-center text-[10.7px] leading-5 text-[#444]">
                <Glyph name="gauge" size={12} />
                <span className="ml-[5px]">Dashboard</span>
                <span className="ml-[7px] text-[#ccc]">&gt;</span>
                <span className="mr-[1px] ml-[8px] text-[#777]">Examiner papers</span>
              </div>
            </div>
            <SearchBox />
            <ResultsBox />
          </div>
        </main>
        <div className="flex w-[15px] flex-col items-center bg-[#fcfcfc]">
          <svg className="mt-[5px]" width="9" height="7" viewBox="0 0 9 7" fill="#8b8b8b"><path d="M4.500 0q.6 0 1 .6L9 6q.2 1-.8 1H.8Q-.2 7 0 6L3.500.6q.4-.6 1-.6z" /></svg>
          <div className="mt-[6px] h-[673px] w-[9px] rounded-full bg-[#8b8b8b]" />
          <svg className="mt-auto mb-[4px]" width="9" height="7" viewBox="0 0 9 7" fill="#8b8b8b"><path d="M4.500 7q.6 0 1-.6L9 1q.2-1-.8-1H.8Q-.2 0 0 1l3.500 5.400q.4.600 1 .600z" /></svg>
        </div>
      </div>
      <Taskbar />
    </div>
  );
}
